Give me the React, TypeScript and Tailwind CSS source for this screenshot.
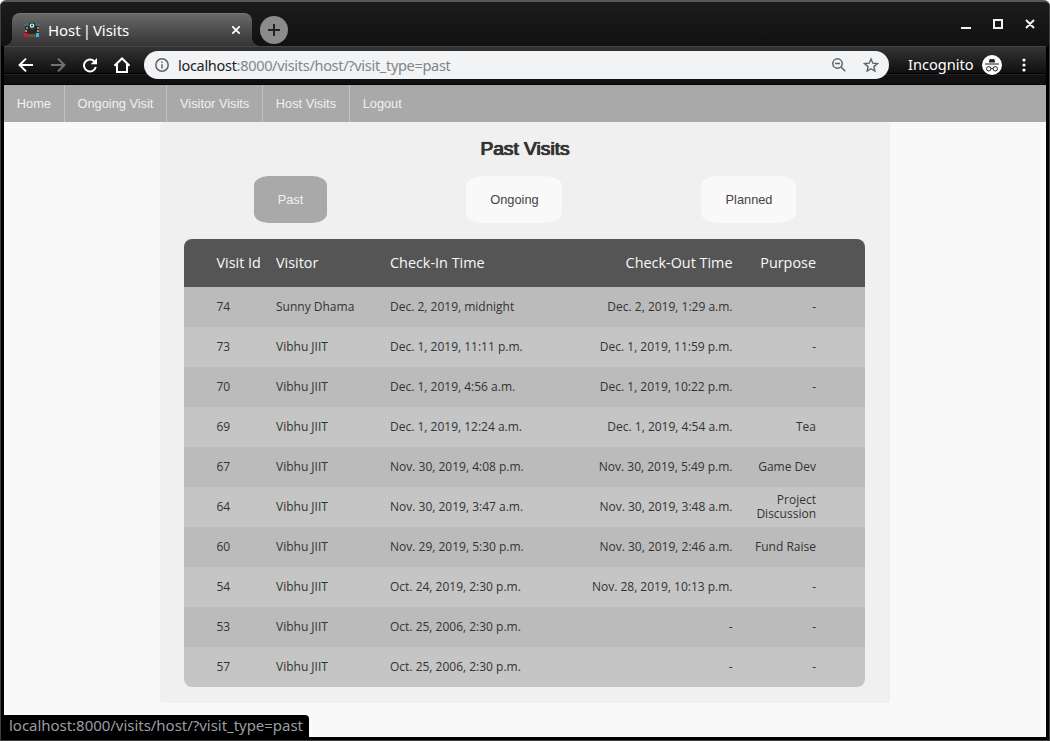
import React from "react";

const visits = [
  ["74", "Sunny Dhama", "Dec. 2, 2019, midnight", "Dec. 2, 2019, 1:29 a.m.", "-"],
  ["73", "Vibhu JIIT", "Dec. 1, 2019, 11:11 p.m.", "Dec. 1, 2019, 11:59 p.m.", "-"],
  ["70", "Vibhu JIIT", "Dec. 1, 2019, 4:56 a.m.", "Dec. 1, 2019, 10:22 p.m.", "-"],
  ["69", "Vibhu JIIT", "Dec. 1, 2019, 12:24 a.m.", "Dec. 1, 2019, 4:54 a.m.", "Tea"],
  ["67", "Vibhu JIIT", "Nov. 30, 2019, 4:08 p.m.", "Nov. 30, 2019, 5:49 p.m.", "Game Dev"],
  ["64", "Vibhu JIIT", "Nov. 30, 2019, 3:47 a.m.", "Nov. 30, 2019, 3:48 a.m.", "Project Discussion"],
  ["60", "Vibhu JIIT", "Nov. 29, 2019, 5:30 p.m.", "Nov. 30, 2019, 2:46 a.m.", "Fund Raise"],
  ["54", "Vibhu JIIT", "Oct. 24, 2019, 2:30 p.m.", "Nov. 28, 2019, 10:13 p.m.", "-"],
  ["53", "Vibhu JIIT", "Oct. 25, 2006, 2:30 p.m.", "-", "-"],
  ["57", "Vibhu JIIT", "Oct. 25, 2006, 2:30 p.m.", "-", "-"],
];

const navItems = ["Home", "Ongoing Visit", "Visitor Visits", "Host Visits", "Logout"];

function Favicon() {
  return (
    <svg width="16" height="16" viewBox="0 0 16 16">
      <rect x="0" y="2" width="4" height="2" fill="#31709b" />
      <rect x="12" y="2" width="4" height="2" fill="#31709b" />
      <rect x="1" y="4" width="14" height="8" fill="#222b31" />
      <rect x="2" y="5" width="2" height="2" fill="#a98248" />
      <rect x="13" y="5" width="2" height="2" fill="#a98248" />
      <rect x="1" y="8" width="2" height="2" fill="#c0894a" />
      <rect x="13" y="8" width="2" height="2" fill="#c0894a" />
      <rect x="0" y="11" width="4" height="4" fill="#d8103a" />
      <rect x="12" y="11" width="3" height="4" fill="#3fb4e6" />
      <path d="M4 15v-2l2-1h4l2 1v2z" fill="#6b4d35" />
      <circle cx="8" cy="3.6" r="2.9" fill="#e8f2ee" stroke="#14493f" strokeWidth="1.4" />
      <circle cx="8" cy="3.6" r="1" fill="#1c3d3a" />
    </svg>
  );
}

function TabStrip() {
  return (
    <div className="flex h-11 bg-linear-to-b from-[#1c1c1c] to-[#111111] pl-[3px]">
      <div className="mt-9 size-2 bg-[radial-gradient(circle_at_0_0,transparent_7.5px,#363636_8px)]" />
      <div className="mt-[11px] flex h-[33px] w-60 items-center rounded-t-[8px] border-t border-[#777] bg-linear-to-b from-[#696969] to-[#343434] pr-[11px] pl-3">
        <Favicon />
        <span className="ml-2 flex-1 whitespace-nowrap font-['Noto_Sans'] text-[15px] leading-[30px] tracking-[-0.05px] text-white [word-spacing:-1.8px]">
          Host | Visits
        </span>
        <svg width="10" height="10" viewBox="0 0 10 10" stroke="#fff" strokeWidth="1.8">
          <path d="M1.3 1.3l7.4 7.4M8.7 1.3L1.3 8.7" />
        </svg>
      </div>
      <div className="mt-9 size-2 bg-[radial-gradient(circle_at_8px_0,transparent_7.5px,#363636_8px)]" />
      <div className="mt-[14px] flex size-7 items-center justify-center rounded-full bg-[#8b8b8b]">
        <svg width="12" height="12" viewBox="0 0 12 12" stroke="#222" strokeWidth="2">
          <path d="M6 0v12M0 6h12" />
        </svg>
      </div>
      <svg className="mt-4 mr-[14px] ml-auto" width="78" height="13" viewBox="0 0 78 13" fill="none" stroke="#f2f2f5" strokeWidth="2">
        <path d="M4 10h10M37 2h8v8h-8zM69 2l8 8M77 2l-8 8" />
      </svg>
    </div>
  );
}

function Toolbar() {
  return (
    <div className="flex h-[39px] flex-col bg-linear-to-b from-[#353535] to-[#101010] to-70%">
      <div className="h-px bg-[#454545]" />
      <div className="flex h-9 items-center bg-[linear-gradient(transparent_26px,#000_26px,#000_27px,#242424_27px,#242424_28px,#111_28px)] pl-[14px]">
        <svg width="112" height="16" viewBox="0 0 112 16" fill="none" stroke="#fff" strokeWidth="2">
          <path d="M15 8H2M8 1.6L1.6 8l6.4 6.4" />
          <path d="M33 8h13M40 1.6L46.4 8 40 14.4" stroke="#737373" />
          <path d="M76.2 4.2A6 6 0 1 0 77.8 10" />
          <path d="M79 1v6.3h-6.3z" fill="#fff" stroke="none" />
          <path d="M96.4 8.7L104 1.5l7.6 7.2M99 7v8h10V7" />
        </svg>
        <div className="ml-[14px] flex h-7 w-[745px] items-center rounded-full bg-[#f1f3f4] pr-[10px] pl-[11px]">
          <svg width="14" height="14" viewBox="0 0 14 14" fill="none" stroke="#5f6368" strokeWidth="1.5">
            <circle cx="7" cy="7" r="6.2" />
            <path d="M7 6.2v4.2M7 3.4v1.5" />
          </svg>
          <span className="ml-[9px] flex-1 pb-px whitespace-nowrap font-['Noto_Sans'] text-[14.5px] leading-[26px] tracking-[-0.3px] text-[#80868b]">
            <span className="text-[#202124]">localhost</span>:8000/visits/host/?visit_type=past
          </span>
          <svg width="14" height="14" viewBox="0 0 14 14" fill="none" stroke="#5f6368" strokeWidth="1.5">
            <circle cx="5.5" cy="5.5" r="4.7" />
            <path d="M9 9l4.3 4.3M3 5.5h5" />
          </svg>
          <svg className="ml-[17px]" width="16" height="16" viewBox="0 0 16 16" fill="none" stroke="#5f6368" strokeWidth="1.4">
            <path d="M8 2l1.8 4.2 4.6.4-3.5 3 1 4.5L8 11.7l-3.9 2.4 1-4.5-3.5-3 4.6-.4z" />
          </svg>
        </div>
        <span className="ml-[19px] w-[67px] pb-0.5 whitespace-nowrap font-['Noto_Sans'] text-[14.6px] leading-[26px] text-white">
          Incognito
        </span>
        <svg className="ml-[7px]" width="20" height="20" viewBox="0 0 20 20">
          <circle cx="10" cy="10" r="10" fill="#fff" />
          <path d="M6.7 7.5L7.8 4h1.5l.7.4.7-.4h1.5l1.1 3.5zM3 8.5h14v1H3z" fill="#222" />
          <g fill="none" stroke="#222" strokeWidth="1">
            <circle cx="6.7" cy="13.8" r="2.2" />
            <circle cx="13.3" cy="13.8" r="2.2" />
            <path d="M9 13.5q1-.7 2 0" />
          </g>
        </svg>
        <svg className="ml-5" width="4" height="14" viewBox="0 0 4 14" fill="#fff">
          <circle cx="2" cy="2" r="1.6" />
          <circle cx="2" cy="7" r="1.6" />
          <circle cx="2" cy="12" r="1.6" />
        </svg>
      </div>
      <div className="h-px bg-[#111]" />
      <div className="h-px bg-black" />
    </div>
  );
}

const rowGrid = "grid grid-cols-[60px_114px_186px_156.5px_83.5px] items-center pl-8";

export default function App() {
  return (
    <div className="relative flex h-[741px] w-[1050px] flex-col overflow-hidden rounded-t-[6px] border-x border-t-2 border-b border-x-[#3e4142] border-t-[#545857] border-b-[#3c3c3c] bg-black text-[12.8px] text-[#444]">
      <TabStrip />
      <div className="mx-[3px] flex flex-1 flex-col bg-[#f9f9f9]">
        <Toolbar />
        <nav className="flex h-[37px] bg-[#a9a9a9] font-['Liberation_Sans'] text-[12.8px] leading-[37px] text-[#f0f0f0]">
          {navItems.map((item) => (
            <a key={item} className="border-r border-[#c2c2c2] px-[12.8px] whitespace-nowrap last:border-r-0">
              {item}
            </a>
          ))}
        </nav>
        <main className="mx-auto h-[581px] w-[730px] rounded-[4px] bg-[#f0f0f0] pr-[25px] pl-6 font-['Liberation_Sans']">
          <h1 className="pt-[14px] pl-px text-center text-[19.2px] leading-[26px] font-normal text-[#333] [text-shadow:0.5px_0_0_#333,-0.5px_0_0_#333,0_0_1px_#333]">
            Past Visits
          </h1>
          <div className="mt-[14px] flex h-[47px] pl-[70px] text-[12.8px] leading-[47px]">
            <a className="w-[73px] rounded-[20%] bg-[#a9a9a9] text-center text-[#f0f0f0]">Past</a>
            <a className="ml-[139px] w-24 rounded-[20%] bg-[#f9f9f9] pl-px text-center">Ongoing</a>
            <a className="ml-[139px] w-[95px] rounded-[20%] bg-[#f9f9f9] pl-px text-center">Planned</a>
          </div>
          <section className="mt-4 overflow-hidden rounded-[8px] font-['Open_Sans'] text-[12px] leading-[14px]">
            <header className={rowGrid + " h-12 bg-[#555] text-[14.4px] whitespace-nowrap text-[#f9f9f9]"}>
              <span className="pl-[0.5px]">Visit Id</span>
              <span>Visitor</span>
              <span>Check-In Time</span>
              <span className="text-right">Check-Out Time</span>
              <span className="text-right">Purpose</span>
            </header>
            {visits.map(([id, visitor, checkIn, checkOut, purpose]) => (
              <div key={id} className={rowGrid + " h-10 bg-[#c5c5c5] text-[#333] even:bg-[#bbbbbb]"}>
                <span className="pl-[0.5px]">{id}</span>
                <span>{visitor}</span>
                <span>{checkIn}</span>
                <span className="text-right">{checkOut}</span>
                <span className="pl-4 text-right">{purpose}</span>
              </div>
            ))}
          </section>
        </main>
      </div>
      <div className="h-[3px] shrink-0 bg-black" />
      <div className="absolute bottom-0 left-[3px] h-[25px] w-[305px] rounded-tr-[4px] bg-black pl-[5px] font-['Noto_Sans'] text-[15px] leading-5 tracking-[-0.03px] whitespace-nowrap text-[#9a9ea3]">
        localhost:8000/visits/host/?visit_type=past
      </div>
    </div>
  );
}
